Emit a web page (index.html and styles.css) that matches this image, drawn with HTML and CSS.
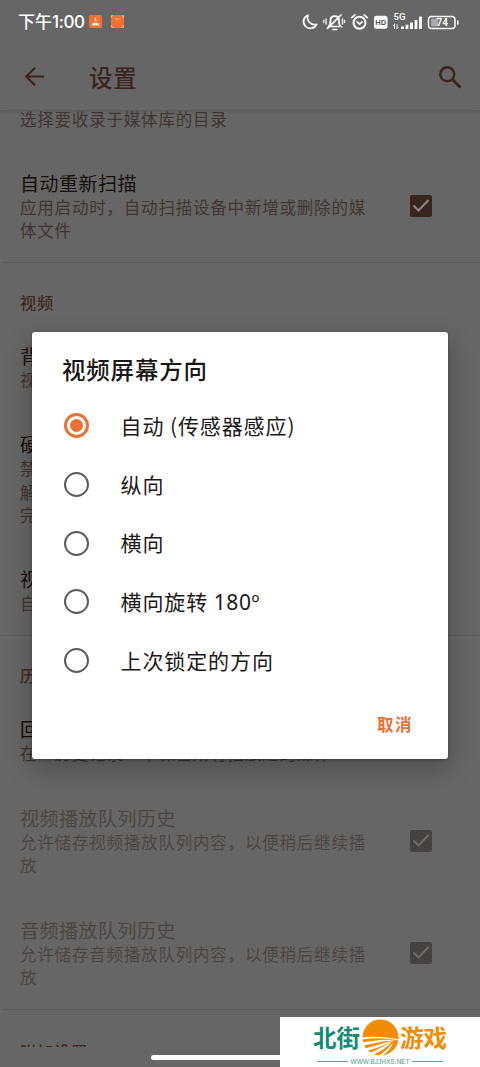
FILE: index.html
```
<!DOCTYPE html>
<html lang="zh-CN">
<head>
<meta charset="utf-8">
<title>设置</title>
<link rel="stylesheet" href="styles.css">
</head>
<body>
<div class="screen">
  <header class="statusbar">
    <span class="clock">下午<b>1:00</b></span>
    <svg class="notif" viewBox="0 0 13 13"><rect width="13" height="13" rx="1" fill="#ee7233"/><path d="M6.500 2.300 5 6.800h3zM3.600 8h5.800l1 2.400H2.600z" fill="#fff" opacity=".85"/><path d="M5 6h3" stroke="#ee7233"/></svg>
    <svg class="notif second" viewBox="0 0 13 13"><rect width="13" height="13" rx="1" fill="#ee7233"/><path d="M.6 3V.7H2M11 .7h1.400V3M.6 10v2.300H3M10 12.300h2.400V10M4 3l2 1.400h1L9 3" fill="none" stroke="#ffc49d" stroke-width=".7"/></svg>
    <svg class="status-icons" viewBox="0 0 160 20" fill="none" stroke="#fff" stroke-width="1.700" stroke-linecap="round">
      <path d="M8 3.200A6.800 6.800 0 1 0 16.600 12.300A7 7 0 0 1 8 3.200z" stroke-linejoin="round"/>
      <g stroke-width="1.700"><path d="M28.500 14.500h12.200c-2-1.600-1.700-4-1.700-6.500 0-2.500-2-3.800-4.200-3.800S30.600 5.500 30.600 8c0 2.500 0 4.500-2.100 6.500M27.500 16.300 41 3M33 17.500h3.600"/><path d="M26 7v5M23.700 8.500v2M42.500 7v5M44.500 8.500v2" stroke-width="1.300"/></g>
      <circle cx="59.500" cy="10.800" r="6" stroke-width="2"/><path d="M57 9.800l2.600 2.300 2.500-2.300M51.700 5.700l3.100-2.700M67.300 5.700l-3.100-2.700"/>
      <rect x="74" y="3.700" width="13.500" height="13" rx="2.500" fill="#fff" stroke="none"/>
      <text x="75.300" y="13" class="hd">HD</text>
      <text x="93.500" y="8" class="net">5G</text>
      <path d="M94.500 12v4.500M97 12.500v4M93.500 13.500l1-1M98 15.500l-1 1" stroke-width=".9"/>
      <path d="M102.500 14.500V17M107 12.800V17M111.500 10.500V17M116 8V17M120.500 4.500V17" stroke-width="2.800" stroke-linecap="butt"/>
      <rect x="128.500" y="4.500" width="26.500" height="12" rx="3.300" stroke-width="1.500"/><rect x="131" y="6.500" width="7" height="8" rx="1" fill="#aaa" stroke="none"/><path d="M157.800 9v3" stroke-width="1.600"/>
      <text x="136.500" y="14.200" class="pct">74</text>
    </svg>
  </header>

  <div class="appbar">
    <svg class="back" viewBox="0 0 24 24" fill="none" stroke="#3a241e" stroke-width="2.400"><path d="M23 12H3.500M12.500 2 2.500 12l10 10"/></svg>
    <h1>设置</h1>
    <svg class="search" viewBox="0 0 24 24" fill="none" stroke="#3a241e"><circle cx="9.300" cy="9.300" r="7" stroke-width="2.400"/><path d="m14.500 14.500 8 8" stroke-width="2.800"/></svg>
  </div>

  <main class="list">
    <section class="group first">
      <div class="pref"><div class="text"><p>选择要收录于媒体库的目录</p></div></div>
      <div class="pref">
        <div class="text"><h3>自动重新扫描</h3><p>应用启动时，自动扫描设备中新增或删除的媒体文件</p></div>
        <svg class="check" viewBox="0 0 22 22"><rect width="22" height="22" rx="2" fill="#3a241e"/><path d="m3.500 10.500 5 5 10-10.500" fill="none" stroke="#858585" stroke-width="2.200"/></svg>
      </div>
    </section>
    <section class="group">
      <h2>视频</h2>
      <div class="pref"><div class="text"><h3>背景播放</h3><p>视频转入后台</p></div></div>
      <div class="pref"><div class="text"><h3>硬件加速</h3><p>禁用：更稳定<br>解码：性能更佳<br>完全：性能最佳</p></div></div>
      <div class="pref"><div class="text"><h3>视频屏幕方向</h3><p>自动</p></div></div>
    </section>
    <section class="group">
      <h2>历史</h2>
      <div class="pref"><div class="text"><h3>回放历史记录</h3><p>在“历史记录”中保留所有播放过的媒体</p></div></div>
      <div class="pref off">
        <div class="text"><h3>视频播放队列历史</h3><p>允许储存视频播放队列内容，以便稍后继续播放</p></div>
        <svg class="check" viewBox="0 0 22 22"><rect width="22" height="22" rx="2" fill="#454342"/><path d="m3.500 10.500 5 5 10-10.500" fill="none" stroke="#6e6e6e" stroke-width="1.900"/></svg>
      </div>
      <div class="pref off">
        <div class="text"><h3>音频播放队列历史</h3><p>允许储存音频播放队列内容，以便稍后继续播放</p></div>
        <svg class="check" viewBox="0 0 22 22"><rect width="22" height="22" rx="2" fill="#454342"/><path d="m3.500 10.500 5 5 10-10.500" fill="none" stroke="#6e6e6e" stroke-width="1.900"/></svg>
      </div>
    </section>
    <section class="group last"><h2>附加设置</h2></section>
  </main>

  <footer class="navbar"><div class="handle"></div></footer>

  <div class="dialog">
    <h2>视频屏幕方向</h2>
    <ul>
      <li><i class="radio on"></i><span>自动 (传感器感应)</span></li>
      <li><i class="radio"></i><span>纵向</span></li>
      <li><i class="radio"></i><span>横向</span></li>
      <li><i class="radio"></i><span>横向旋转 <b>180º</b></span></li>
      <li><i class="radio"></i><span>上次锁定的方向</span></li>
    </ul>
    <div class="actions"><button>取消</button></div>
  </div>

  <div class="badge">
    <div class="brand">
      <span class="green">北街</span>
      <svg viewBox="0 0 37 37"><circle cx="18.500" cy="18.500" r="18" fill="#f18d05"/><path d="M0 18.500C12 17 24 18 37 20.500V21.500C24 19 12 18.500 0 20.500zM0 23.500C12 22 23 19.500 34 21.500 22 21.500 12 24.500 1 26.500zM2 29.500C12 28 22 23 31 22 24 25 14 30 4 32zM6 34.500C16 31 23 26 30 23 25 28 18 33 10 36.500zM16 37C22 34 27 28 31 24 29 29 25 34 20 37z" fill="#fff"/></svg>
      <span class="orange">游戏</span>
    </div>
    <div class="site"><i></i><span>WWW.BJJHXS.NET</span><i></i></div>
  </div>
</div>
</body>
</html>
```
FILE: styles.css
```
* { box-sizing: border-box; margin: 0; padding: 0; }
body { background: #666; font-family: "Noto Sans CJK SC", sans-serif; }
.screen { position: relative; width: 480px; height: 1067px; overflow: hidden; display: flex; flex-direction: column; background: #666; }

.statusbar { height: 43px; display: flex; align-items: center; padding: 0 20px 0 18px; color: #fff; }
.clock { font-size: 17px; font-weight: 500; line-height: 24px; width: 71px; white-space: nowrap; }
.clock b { font: 500 17px/24px "Inter", sans-serif; letter-spacing: -.4px; }
.notif { width: 13px; height: 13px; }
.notif.second { margin-left: 9px; }
.status-icons { width: 160px; height: 20px; margin-left: auto; }
.hd { font: 700 7.500px "Liberation Sans", sans-serif; fill: #555; stroke: none; }
.net { font: 500 9.500px "Roboto", sans-serif; fill: #fff; stroke: none; }
.pct { font: 700 10px "Roboto", sans-serif; fill: #fff; stroke: none; }

.appbar { height: 68px; display: flex; align-items: center; padding: 0 18px 0 24px; border-bottom: 1px solid #5a5a5a; box-shadow: 0 1px 2px rgba(0,0,0,.1); }
.back { width: 21px; height: 21px; }
.appbar h1 { margin-left: 44px; font-size: 23.500px; letter-spacing: .8px; font-weight: 500; line-height: 30px; color: #3a241e; }
.search { width: 24px; height: 24px; margin-left: auto; }

.list { height: 936px; overflow: hidden; padding-left: 2px; }
.group { border-top: 1px solid #5a5a5a; padding-top: 27px; }
.group.first { border: 0; padding: 0; margin-top: -22.500px; }
.group.last { padding-top: 29px; }
.group h2 { padding-left: 18px; margin-bottom: 10px; font-size: 16.200px; letter-spacing: .8px; font-weight: 500; line-height: 24px; color: #3f2a23; }
.pref { display: flex; align-items: center; justify-content: space-between; padding: 19px 48px 19.500px 18px; }
.text { width: 351px; }
.pref h3 { font-size: 19px; letter-spacing: .5px; font-weight: 400; line-height: 26px; color: #160e0c; }
.pref p { font-size: 16.500px; letter-spacing: .8px; font-weight: 400; line-height: 23.500px; color: #3f3633; }
.pref.off { padding-top: 19.500px; }
.pref.off h3, .pref.off p { color: #4b4644; }
.check { width: 22px; height: 22px; flex: none; }

.navbar { flex: 1; }
.handle { width: 178px; height: 5px; margin: 8px auto 0; border-radius: 3px; background: #fff; }

.dialog { position: absolute; left: 32px; top: 332px; width: 416px; height: 427px; border-radius: 3px; background: #fff; box-shadow: 0 9px 24px 2px rgba(0,0,0,.22), 0 1px 3px rgba(0,0,0,.3); display: flex; flex-direction: column; }
.dialog h2 { padding: 21px 0 0 30px; font-size: 23.500px; letter-spacing: .8px; font-weight: 500; line-height: 32px; color: #1b1716; }
.dialog ul { list-style: none; padding: 11.500px 0 0 31.500px; }
.dialog li { height: 58.700px; display: flex; align-items: center; font-size: 21px; letter-spacing: .9px; line-height: 30px; color: #1d1918; white-space: pre; }
.dialog li span { padding-bottom: 2px; }
.dialog li b { font: 400 21px/28px "Noto Sans", sans-serif; letter-spacing: .6px; }
.radio { width: 25px; height: 25px; flex: none; margin-right: 32px; border: 2.500px solid #5c5c5c; border-radius: 50%; }
.radio.on { border: 3px solid #e97132; display: grid; place-items: center; }
.radio.on::after { content: ""; width: 13px; height: 13px; border-radius: 50%; background: #e97132; }
.actions { display: flex; justify-content: flex-end; padding: 22px 35px 0 0; }
.actions button { border: 0; background: none; font: 700 16.500px/24px "Noto Sans CJK SC", sans-serif; letter-spacing: 1.500px; color: #e97132; }

.badge { position: absolute; left: 280px; top: 1017px; width: 200px; height: 50px; background: #fff; }
.brand { display: flex; align-items: center; height: 38px; padding: 2px 0 0 33px; font-size: 23.500px; font-weight: 700; line-height: 36px; }
.brand span { width: 49px; flex: none; white-space: nowrap; }
.brand svg { width: 37px; height: 37px; flex: none; }
.green { color: #148b74; }
.orange { color: #f18d05; padding-left: 1px; }
.site { display: flex; align-items: center; justify-content: center; gap: 3px; height: 13px; font: 6.500px/12px "Liberation Sans", sans-serif; color: #3f9d89; }
.site i { width: 31px; height: 1px; background: #58ac9b; }
```
